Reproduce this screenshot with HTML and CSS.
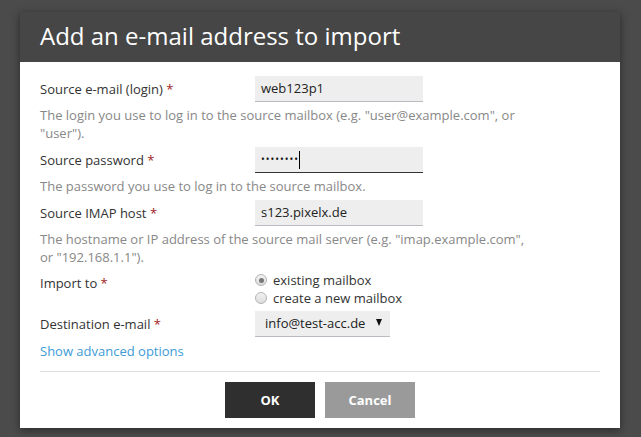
FILE: index.html
```html
<!DOCTYPE html>
<html lang="en">
<head>
<meta charset="utf-8">
<title>Add an e-mail address to import</title>
<link rel="stylesheet" href="styles.css">
</head>
<body>
<div class="dialog">
  <div class="dialog-header">
    <h1 class="dialog-title">Add an e-mail address to import</h1>
  </div>
  <div class="dialog-body">
    <div class="field">
      <div class="label">Source e-mail (login) <span class="req">*</span></div>
      <div class="input">web123p1</div>
    </div>
    <p class="help">The login you use to log in to the source mailbox (e.g. "user@example.com", or "user").</p>

    <div class="field">
      <div class="label">Source password <span class="req">*</span></div>
      <div class="input input-focus"><span class="dots">••••••••</span><span class="caret"></span></div>
    </div>
    <p class="help">The password you use to log in to the source mailbox.</p>

    <div class="field">
      <div class="label">Source IMAP host <span class="req">*</span></div>
      <div class="input">s123.pixelx.de</div>
    </div>
    <p class="help">The hostname or IP address of the source mail server (e.g. "imap.example.com", or "192.168.1.1").</p>

    <div class="field field-top">
      <div class="label label-top">Import to <span class="req">*</span></div>
      <div class="radios">
        <div class="radio-row"><span class="radio radio-on"></span><span>existing mailbox</span></div>
        <div class="radio-row"><span class="radio"></span><span>create a new mailbox</span></div>
      </div>
    </div>

    <div class="field field-select">
      <div class="label">Destination e-mail <span class="req">*</span></div>
      <div class="select"><span>info@test-acc.de</span><span class="arrow"></span></div>
    </div>

    <div class="link">Show advanced options</div>

    <div class="separator"></div>

    <div class="buttons">
      <div class="btn btn-ok">OK</div>
      <div class="btn btn-cancel">Cancel</div>
    </div>
  </div>
</div>
</body>
</html>
```
FILE: styles.css
```css
html, body {
  margin: 0;
  padding: 0;
}
body {
  background: #4b4b4b;
  font-family: "Open Sans", "DejaVu Sans", sans-serif;
  font-size: 13px;
  color: #333;
  padding: 12px 0 0 20px;
  height: 437px;
  box-sizing: border-box;
  overflow: hidden;
}
.dialog {
  width: 600px;
  background: #fff;
  box-shadow: 0 2px 8px rgba(0, 0, 0, 0.45);
}
.dialog-header {
  background: #464646;
  height: 50px;
  padding: 0 20px;
  box-sizing: border-box;
}
.dialog-title {
  margin: 0;
  font-weight: 400;
  font-size: 24px;
  line-height: 48px;
  color: #fff;
}
.dialog-body {
  padding: 14px 20px 10px;
}
.field {
  display: grid;
  grid-template-columns: 215px auto;
  align-items: center;
  justify-items: start;
}
.field-top {
  align-items: start;
}
.label {
  line-height: 18px;
}
.label-top {
  padding-top: 3px;
}
.req {
  color: #9e1c1c;
}
.input {
  width: 168px;
  height: 26px;
  box-sizing: border-box;
  background: #eeeeee;
  border-bottom: 1px solid #b9bdc2;
  padding: 0 6px;
  line-height: 25px;
  color: #222;
  display: flex;
  align-items: center;
}
.input-focus {
  border-bottom-color: #333;
}
.dots {
  font-size: 10px;
  letter-spacing: 1px;
  color: #111;
}
.caret {
  display: inline-block;
  width: 1px;
  height: 18px;
  background: #000;
  margin-left: 0;
}
.help {
  margin: 4px 0 5px;
  width: 490px;
  line-height: 18px;
  color: #888;
}
.radios {
  line-height: 18px;
}
.radio-row {
  display: flex;
  align-items: center;
  height: 18px;
}
.radio {
  width: 12px;
  height: 12px;
  box-sizing: border-box;
  border-radius: 50%;
  border: 1px solid #b4b4b4;
  background: linear-gradient(#f2f2f2, #dcdcdc);
  margin: 0 6px 0 0;
  position: relative;
}
.radio-on::after {
  content: "";
  position: absolute;
  left: 2.5px;
  top: 2.5px;
  width: 5px;
  height: 5px;
  border-radius: 50%;
  background: #777;
}
.field-select {
  margin-top: 4px;
}
.select {
  width: 135px;
  height: 26px;
  box-sizing: border-box;
  background: #eeeeee;
  border-bottom: 1px solid #b9bdc2;
  padding: 0 10px;
  line-height: 25px;
  color: #222;
  display: flex;
  align-items: center;
  justify-content: space-between;
}
.arrow {
  width: 0;
  height: 0;
  border-left: 3.5px solid transparent;
  border-right: 3.5px solid transparent;
  border-top: 7px solid #111;
  margin-right: -2px;
  margin-top: -3px;
}
.link {
  margin-top: 5px;
  line-height: 18px;
  color: #3d9bd6;
}
.separator {
  margin-top: 11px;
  border-top: 1px solid #dddddd;
}
.buttons {
  display: flex;
  justify-content: center;
  gap: 10px;
  margin-top: 10px;
}
.btn {
  width: 90px;
  height: 36px;
  line-height: 36px;
  text-align: center;
  font-weight: 700;
  color: #fff;
}
.btn-ok {
  background: #2f2f2f;
}
.btn-cancel {
  background: #9a9a9a;
}
```
